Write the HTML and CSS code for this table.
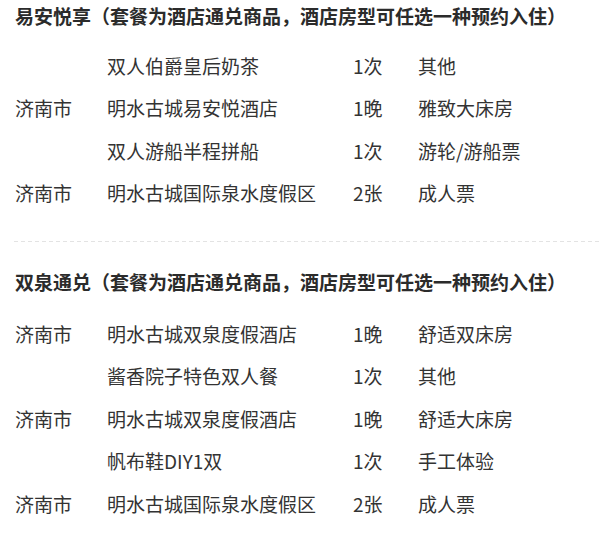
FILE: index.html
```html
<!DOCTYPE html>
<html lang="zh-CN">
<head>
<meta charset="utf-8">
<title>套餐内容</title>
<link rel="stylesheet" href="styles.css">
</head>
<body>
<div class="page">
  <section class="pkg pkg-first">
    <h2 class="pkg-title">易安悦享（套餐为酒店通兑商品，酒店房型可任选一种预约入住）</h2>
    <div class="pkg-list">
      <div class="row"><span class="city"></span><span class="name">双人伯爵皇后奶茶</span><span class="qty">1次</span><span class="kind">其他</span></div>
      <div class="row"><span class="city">济南市</span><span class="name">明水古城易安悦酒店</span><span class="qty">1晚</span><span class="kind">雅致大床房</span></div>
      <div class="row"><span class="city"></span><span class="name">双人游船半程拼船</span><span class="qty">1次</span><span class="kind">游轮/游船票</span></div>
      <div class="row"><span class="city">济南市</span><span class="name">明水古城国际泉水度假区</span><span class="qty">2张</span><span class="kind">成人票</span></div>
    </div>
  </section>
  <div class="divider"></div>
  <section class="pkg pkg-second">
    <h2 class="pkg-title">双泉通兑（套餐为酒店通兑商品，酒店房型可任选一种预约入住）</h2>
    <div class="pkg-list">
      <div class="row"><span class="city">济南市</span><span class="name">明水古城双泉度假酒店</span><span class="qty">1晚</span><span class="kind">舒适双床房</span></div>
      <div class="row"><span class="city"></span><span class="name">酱香院子特色双人餐</span><span class="qty">1次</span><span class="kind">其他</span></div>
      <div class="row"><span class="city">济南市</span><span class="name">明水古城双泉度假酒店</span><span class="qty">1晚</span><span class="kind">舒适大床房</span></div>
      <div class="row"><span class="city"></span><span class="name">帆布鞋DIY1双</span><span class="qty">1次</span><span class="kind">手工体验</span></div>
      <div class="row"><span class="city">济南市</span><span class="name">明水古城国际泉水度假区</span><span class="qty">2张</span><span class="kind">成人票</span></div>
    </div>
  </section>
</div>
</body>
</html>
```
FILE: styles.css
```css
html, body {
  margin: 0;
  padding: 0;
  background: #ffffff;
}

body {
  font-family: "Noto Sans CJK SC", "Noto Sans", sans-serif;
  font-size: 19px;
  color: #333333;
}

.page {
  width: 600px;
}

.pkg {
  padding-left: 15px;
}

.pkg-title {
  margin: 0;
  font-size: 19px;
  font-weight: 700;
  line-height: 32px;
  color: #2b2b2b;
  white-space: nowrap;
}

.pkg-second {
  padding-top: 24px;
}

.pkg-list {
  margin-top: 12px;
}

.pkg-second .pkg-list {
  margin-top: 14px;
}

.row {
  display: grid;
  grid-template-columns: 92px 246px 65px 1fr;
  align-items: center;
  height: 42.5px;
  white-space: nowrap;
}

.divider {
  margin: 27px 0 0 14px;
  height: 1px;
  background-image: repeating-linear-gradient(to right, #e3e3e3 0 4px, transparent 4px 7px);
}
```
